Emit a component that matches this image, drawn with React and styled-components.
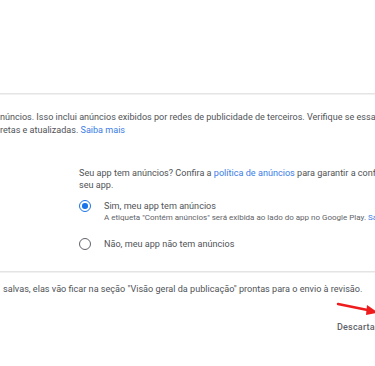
import React from "react";
import styled, { createGlobalStyle } from "styled-components";

const Global = createGlobalStyle`
  html, body { margin: 0; padding: 0; background: #fff; }
  body { font-family: Roboto, "Noto Sans", Arial, sans-serif; -webkit-font-smoothing: antialiased; }
`;

const Page = styled.div`
  position: relative;
  width: 375px;
  height: 366px;
  overflow: hidden;
  background: #fff;
  color: #505357;
  white-space: nowrap;
`;

const Spacer = styled.div`
  height: ${(p) => p.$h}px;
`;

const Divider = styled.div`
  height: 1px;
  background: #e4e4e4;
  box-shadow: 0 1px 0 #f1f1f1;
`;

const Paragraph = styled.p`
  margin: 0;
  padding: ${(p) => p.$pad || "0"};
  font-size: ${(p) => p.$fs || 9.1}px;
  line-height: ${(p) => p.$lh || 13}px;
  color: #505357;
`;

const Link = styled.a`
  color: #3b7de6;
  text-decoration: none;
`;

const Question = styled.section`
  padding: 0 0 0 79px;
  display: flex;
  flex-direction: column;
`;

const Options = styled.div`
  display: flex;
  flex-direction: column;
  gap: 15px;
  margin-top: 9px;
`;

const Option = styled.label`
  display: grid;
  grid-template-columns: 25px 1fr;
  align-items: start;
`;

const Radio = styled.span`
  box-sizing: border-box;
  width: 12px;
  height: 12px;
  border-radius: 50%;
  border: 1.6px solid ${(p) => (p.$checked ? "#1a73e8" : "#5f6368")};
  display: flex;
  align-items: center;
  justify-content: center;
  &::after {
    content: "";
    width: 5.5px;
    height: 5.5px;
    border-radius: 50%;
    background: ${(p) => (p.$checked ? "#1a73e8" : "transparent")};
  }
`;

const OptionText = styled.div`
  display: flex;
  flex-direction: column;
`;

const OptionLabel = styled.span`
  font-size: 9.1px;
  line-height: 12px;
  color: #505357;
`;

const OptionHint = styled.span`
  font-size: 8px;
  line-height: 11px;
  color: #5f6368;
`;

const Footer = styled.div`
  display: flex;
  padding: 25px 0 0 337px;
`;

const GhostButton = styled.span`
  font-size: 9px;
  font-weight: 500;
  color: #5f6368;
  letter-spacing: 0.2px;
  line-height: 12px;
`;

const Arrow = styled.svg`
  position: absolute;
  left: 336px;
  top: 300px;
`;

export default function App() {
  return (
    <>
      <Global />
      <Page>
        <Spacer $h={93} />
        <Divider />
        <Paragraph $pad="17px 0 0 0" $lh={13} $fs={9.05}>
          núncios. Isso inclui anúncios exibidos por redes de publicidade de terceiros. Verifique se essas
          <br />
          retas e atualizadas. <Link href="#">Saiba mais</Link>
        </Paragraph>
        <Spacer $h={31} />
        <Question>
          <Paragraph $lh={11.5}>
            Seu app tem anúncios? Confira a <Link href="#">política de anúncios</Link> para garantir a conformidade do
            <br />
            seu app.
          </Paragraph>
          <Options>
            <Option>
              <Radio $checked />
              <OptionText>
                <OptionLabel>Sim, meu app tem anúncios</OptionLabel>
                <OptionHint>
                  A etiqueta "Contém anúncios" será exibida ao lado do app no Google Play. <Link href="#">Saiba mais</Link>
                </OptionHint>
              </OptionText>
            </Option>
            <Option>
              <Radio />
              <OptionText>
                <OptionLabel>Não, meu app não tem anúncios</OptionLabel>
              </OptionText>
            </Option>
          </Options>
        </Question>
        <Spacer $h={21} />
        <Divider />
        <Paragraph $pad="11px 0 0 3px" $lh={13}>
          salvas, elas vão ficar na seção "Visão geral da publicação" prontas para o envio à revisão.
        </Paragraph>
        <Footer>
          <GhostButton>Descartar alterações</GhostButton>
        </Footer>
        <Arrow width="42" height="16" viewBox="0 0 42 16">
          <line x1="2" y1="4" x2="34" y2="10.5" stroke="#ee1c1c" strokeWidth="2.4" strokeLinecap="round" />
          <polygon points="42,12.5 31,5 30,15" fill="#ee1c1c" />
        </Arrow>
      </Page>
    </>
  );
}
